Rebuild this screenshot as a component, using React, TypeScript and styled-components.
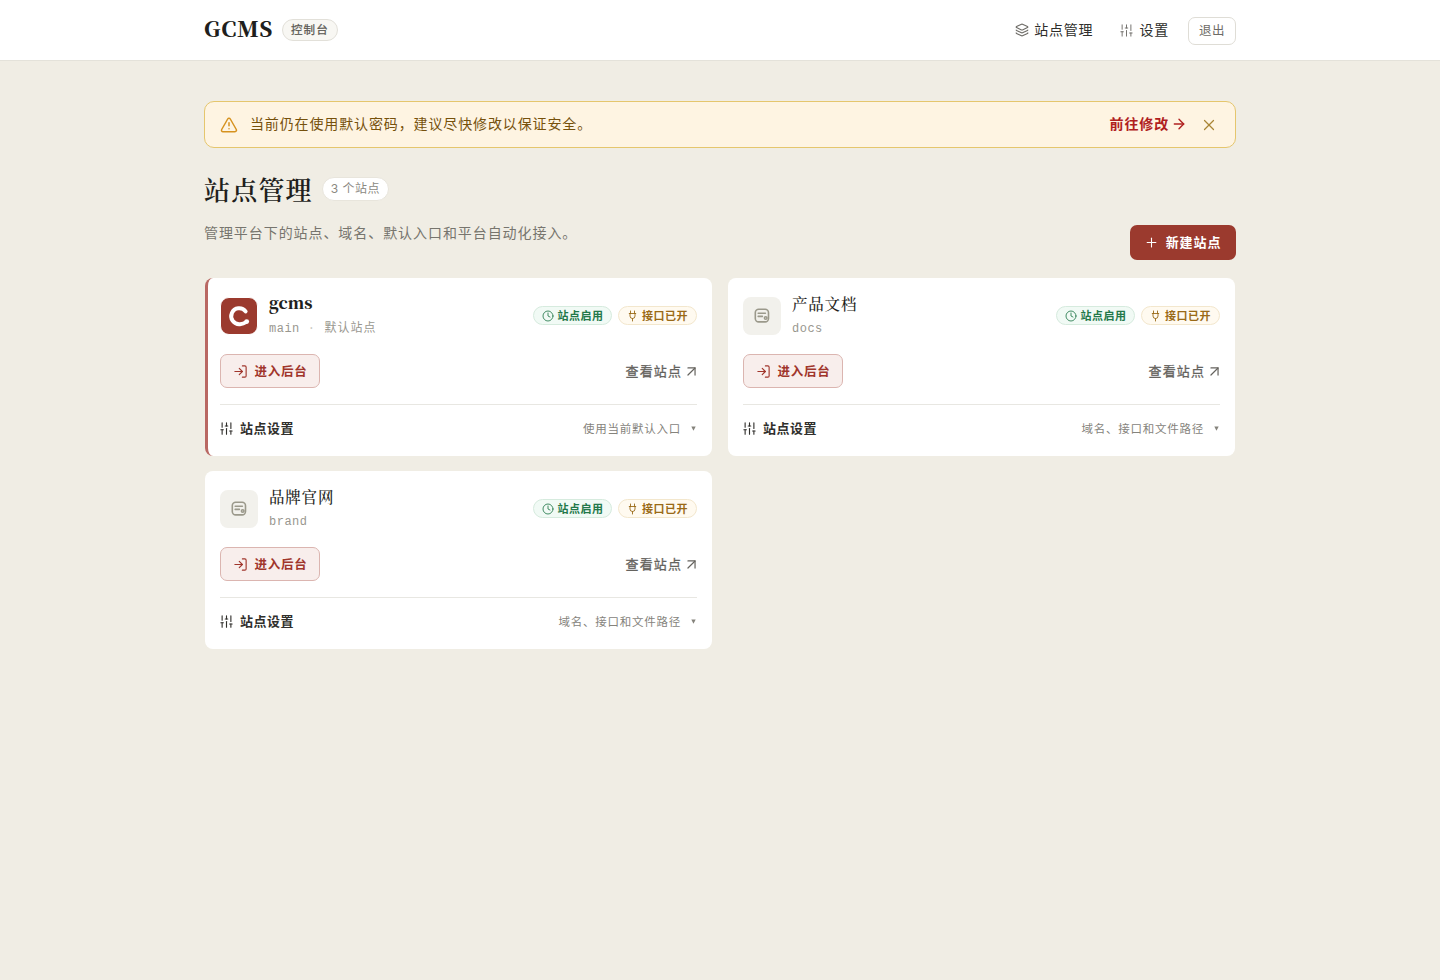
import React from "react";
import styled, { createGlobalStyle, css } from "styled-components";
import { ArrowRight, ArrowUpRight, Clock, Layers, LogIn, Plus, SlidersVertical, TriangleAlert, X } from "lucide-react";

const sans = `"Inter", "Noto Sans CJK SC", sans-serif`;
const cjkSans = `"Noto Sans CJK SC", sans-serif`;
const serif = `"Noto Serif CJK SC", "Noto Serif SC", "Source Han Serif SC", "Songti SC", "Liberation Serif", serif`;
const mono = `"Liberation Mono", "Noto Sans CJK SC", monospace`;

const GlobalStyle = createGlobalStyle`
  *, *::before, *::after { box-sizing: border-box; }
  body {
    margin: 0;
    min-height: 100vh;
    background: #f0ede4;
    color: #1f1f1d;
    font-family: ${sans};
    font-size: 14px;
    line-height: 1.5;
  }
  svg { display: block; flex: none; }
  a { color: inherit; text-decoration: none; }
  button { font-family: inherit; cursor: pointer; }
  h1, h2, p { margin: 0; }
`;

const Label = styled.span`
  padding-bottom: 2px;
`;

const Header = styled.header`
  height: 61px;
  background: #fff;
  border-bottom: 1px solid #e4e2da;
`;
const HeaderInner = styled.div`
  width: 1032px;
  height: 60px;
  margin: 0 auto;
  display: flex;
  align-items: center;
  justify-content: space-between;
`;
const Brand = styled.a`
  display: flex;
  align-items: center;
`;
const BrandName = styled.span`
  width: 78px;
  padding-bottom: 4px;
  font-family: ${serif};
  font-size: 21.5px;
  font-weight: 900;
  letter-spacing: 0.5px;
  line-height: 30px;
  white-space: nowrap;
`;
const BrandTag = styled.span`
  height: 22px;
  padding: 0 8px 0 8px;
  border: 1px solid #e2e0d9;
  border-radius: 11px;
  background: #f8f7f3;
  color: #5c5a55;
  font-size: 11.5px;
  -webkit-text-stroke: 0.25px currentColor;
  letter-spacing: 1.1px;
  line-height: 20px;
`;
const Nav = styled.nav`
  display: flex;
  align-items: center;
`;
const NavLink = styled.a`
  display: flex;
  align-items: center;
  gap: 5px;
  margin-right: 26px;
  font-size: 14px;
  letter-spacing: 0.8px;
  color: #2e2e2b;
  svg { color: #6d6b66; }
  & + & {
    margin-right: 19px;
  }
`;
const LogoutButton = styled.button`
  width: 48px;
  height: 28px;
  margin-top: 1px;
  padding: 0 0 2px;
  border: 1px solid #dfddd6;
  border-radius: 7px;
  background: #fff;
  color: #6d6b66;
  font-size: 12.5px;
  letter-spacing: 0.5px;
`;

const Main = styled.main`
  width: 1032px;
  margin: 0 auto;
  padding-top: 40px;
`;
const Alert = styled.div`
  height: 47px;
  padding: 0 17px 0 15px;
  display: flex;
  align-items: center;
  border: 1px solid #e5c66d;
  border-radius: 10px;
  background: #fef4e2;
  color: #76510c;
`;
const AlertText = styled.p`
  flex: 1;
  margin-left: 12px;
  padding-bottom: 3px;
  font-family: ${cjkSans};
  letter-spacing: 0.87px;
`;
const AlertLink = styled.a`
  display: flex;
  align-items: center;
  gap: 2px;
  margin-right: 13px;
  color: #b02020;
  font-weight: 700;
  letter-spacing: 0.87px;
  svg { margin-bottom: 1px; }
`;

const PageHead = styled.div`
  height: 129px;
  display: flex;
  justify-content: space-between;
  align-items: flex-end;
  padding: 22px 0 17px;
`;
const HeadCopy = styled.div`
  align-self: flex-start;
`;
const TitleRow = styled.div`
  display: flex;
  align-items: center;
  gap: 9px;
`;
const Title = styled.h1`
  font-family: ${serif};
  font-size: 26px;
  font-weight: 600;
  line-height: 38px;
  letter-spacing: 1.2px;
`;
const CountPill = styled.span`
  height: 24px;
  padding: 0 8px;
  border: 1px solid #e8e5dc;
  border-radius: 12px;
  background: #fff;
  color: #8b8982;
  font-size: 12px;
  letter-spacing: 0.5px;
  line-height: 22px;
`;
const Subtitle = styled.p`
  margin-top: 14px;
  color: #77756e;
  font-family: ${cjkSans};
  letter-spacing: 0.93px;
`;
const CreateButton = styled.button`
  width: 106px;
  height: 35px;
  display: flex;
  align-items: center;
  justify-content: center;
  gap: 7px;
  padding: 0 1px 1px 0;
  border: 0;
  border-radius: 7px;
  background: #9b3a2e;
  color: #fff;
  font-size: 13px;
  font-weight: 700;
  letter-spacing: 0.9px;
`;

const Grid = styled.div`
  display: grid;
  grid-template-columns: 1fr 1fr;
  gap: 13px 14px;
`;
const Card = styled.article<{ $primary?: boolean }>`
  height: 178px;
  margin: 1px;
  padding: 0 15px;
  border-radius: 8px;
  background: #fff;
  ${(p) =>
    p.$primary &&
    css`
      padding-left: 12px;
      border-left: 3px solid #b96863;
    `}
`;
const CardTop = styled.div`
  height: 76px;
  display: flex;
  align-items: center;
`;
const Tile = styled.div<{ $brand?: boolean }>`
  width: 38px;
  height: 38px;
  display: grid;
  place-items: center;
  border-radius: 8px;
  color: #9b998b;
  background: #f2f1ec;
  ${(p) =>
    p.$brand &&
    css`
      border: 1px solid #fff;
      border-radius: 9px;
      background: #9b3a2e;
      color: #fff;
    `}
`;
const SiteInfo = styled.div`
  flex: 1;
  margin-left: 11px;
  padding-bottom: 2px;
`;
const SiteName = styled.h2<{ $latin?: boolean }>`
  font-family: ${serif};
  font-size: ${(p) => (p.$latin ? "16px" : "15.5px")};
  font-weight: ${(p) => (p.$latin ? 900 : 500)};
  letter-spacing: ${(p) => (p.$latin ? "0" : "0.8px")};
  line-height: 20px;
`;
const SiteMeta = styled.div`
  display: flex;
  gap: 8px;
  font-family: ${mono};
  font-size: 12px;
  line-height: 18px;
  margin-top: 7px;
  letter-spacing: 0.5px;
  color: #99978f;
`;
const Dot = styled.span`
  color: #cbc9c2;
`;
const MetaNote = styled.span`
  margin-left: 1px;
  letter-spacing: 1px;
`;
const Badges = styled.div`
  display: flex;
  gap: 6px;
  margin-bottom: 1px;
`;
const Badge = styled.span<{ $tone: "green" | "amber" }>`
  width: 79px;
  height: 19px;
  padding-top: 1px;
  display: flex;
  align-items: center;
  justify-content: center;
  gap: 4px;
  border-radius: 10px;
  font-size: 11px;
  font-weight: 700;
  letter-spacing: 0.5px;
  line-height: 16px;
  ${(p) =>
    p.$tone === "green"
      ? css`
          color: #23784a;
          background: #f1faf5;
          border: 1px solid #d6ebde;
        `
      : css`
          color: #9a6a17;
          background: #fffaf0;
          border: 1px solid #f3e7cd;
        `}
`;
const CardActions = styled.div`
  height: 34px;
  display: flex;
  align-items: center;
  justify-content: space-between;
`;
const EnterButton = styled.button`
  width: 100px;
  height: 34px;
  display: flex;
  align-items: center;
  justify-content: center;
  gap: 7px;
  padding: 0;
  border: 1px solid #dbb5b0;
  border-radius: 7px;
  background: #f8eeec;
  color: #a0352b;
  font-size: 12.5px;
  font-weight: 700;
  letter-spacing: 0.7px;
`;
const VisitLink = styled.a`
  display: flex;
  align-items: center;
  margin-right: -3px;
  gap: 1px;
  color: #65635e;
  font-size: 13px;
  -webkit-text-stroke: 0.3px currentColor;
  letter-spacing: 1.1px;
  span { padding-top: 2px; }
`;
const SettingsRow = styled.div`
  height: 50px;
  margin-top: 16px;
  padding-bottom: 1px;
  border-top: 1px solid #e8e7e2;
  display: flex;
  align-items: center;
  justify-content: space-between;
`;
const SettingsLabel = styled.span`
  display: flex;
  align-items: center;
  gap: 6px;
  margin-left: -1px;
  font-size: 13px;
  font-weight: 700;
  letter-spacing: 0.5px;
  color: #302f2c;
  svg { margin-bottom: 2px; }
`;
const SettingsHint = styled.span`
  display: flex;
  align-items: center;
  gap: 10px;
  margin-right: 1px;
  font-size: 11.5px;
  letter-spacing: 0.75px;
  color: #85837c;
  span { padding-top: 2px; }
  svg { margin-bottom: 1px; }
`;

const PlugIcon = () => (
  <svg width="11" height="12" viewBox="0 0 22 24" fill="none" stroke="currentColor" strokeWidth="1.800" strokeLinecap="round" strokeLinejoin="round">
    <path d="M7 2v5M15 2v5M4.500 7h13M6 7v5a5 5 0 0 0 10 0V7M11 17v5" />
  </svg>
);
const LogoMark = () => (
  <svg width="36" height="36" viewBox="0 0 36 36" fill="none">
    <path d="M24.600 13.400A8 8 0 1 0 19 26.200Q22.500 26 25.200 24" stroke="currentColor" strokeWidth="4" strokeLinecap="round" />
    <circle cx="25.700" cy="23.600" r="2.400" fill="currentColor" />
  </svg>
);
const SiteIcon = () => (
  <svg width="16" height="16" viewBox="0 0 16 16" fill="none" stroke="currentColor" strokeWidth="1.600" strokeLinecap="round">
    <rect x="1.300" y="1.300" width="13.200" height="12.600" rx="3.400" />
    <path d="M4.200 5.200h7.200M4.200 8.400h4.200" />
    <circle cx="11.700" cy="10" r="1.300" />
  </svg>
);
const Caret = () => (
  <svg width="5" height="5" viewBox="0 0 5 5">
    <path d="M.300 .600h4.400L2.500 4.700z" fill="currentColor" />
  </svg>
);

type Site = { name: string; slug: string; isDefault?: boolean; hint: string };

const sites: Site[] = [
  { name: "gcms", slug: "main", isDefault: true, hint: "使用当前默认入口" },
  { name: "产品文档", slug: "docs", hint: "域名、接口和文件路径" },
  { name: "品牌官网", slug: "brand", hint: "域名、接口和文件路径" },
];

const SiteCard = ({ site }: { site: Site }) => (
  <Card $primary={site.isDefault}>
    <CardTop>
      <Tile $brand={site.isDefault}>{site.isDefault ? <LogoMark /> : <SiteIcon />}</Tile>
      <SiteInfo>
        <SiteName $latin={site.isDefault}>{site.name}</SiteName>
        <SiteMeta>
          <span>{site.slug}</span>
          {site.isDefault && (
            <>
              <Dot>·</Dot>
              <MetaNote>默认站点</MetaNote>
            </>
          )}
        </SiteMeta>
      </SiteInfo>
      <Badges>
        <Badge $tone="green">
          <Clock size={12} strokeWidth={1.7} />
          站点启用
        </Badge>
        <Badge $tone="amber">
          <PlugIcon />
          接口已开
        </Badge>
      </Badges>
    </CardTop>
    <CardActions>
      <EnterButton>
        <LogIn size={15} strokeWidth={1.8} />
        <Label>进入后台</Label>
      </EnterButton>
      <VisitLink href="#">
        <span>查看站点</span>
        <ArrowUpRight size={17} strokeWidth={1.7} />
      </VisitLink>
    </CardActions>
    <SettingsRow>
      <SettingsLabel>
        <SlidersVertical size={15} strokeWidth={1.8} />
        <span>站点设置</span>
      </SettingsLabel>
      <SettingsHint>
        <span>{site.hint}</span>
        <Caret />
      </SettingsHint>
    </SettingsRow>
  </Card>
);

export default function App() {
  return (
    <div lang="zh-CN">
      <GlobalStyle />
      <Header>
        <HeaderInner>
          <Brand href="#">
            <BrandName>GCMS</BrandName>
            <BrandTag>控制台</BrandTag>
          </Brand>
          <Nav>
            <NavLink href="#">
              <Layers size={14} strokeWidth={1.9} />
              <Label>站点管理</Label>
            </NavLink>
            <NavLink href="#">
              <SlidersVertical size={15} strokeWidth={1.5} />
              <Label>设置</Label>
            </NavLink>
            <LogoutButton>退出</LogoutButton>
          </Nav>
        </HeaderInner>
      </Header>
      <Main>
        <Alert>
          <TriangleAlert size={18} strokeWidth={2} color="#d6921f" />
          <AlertText>当前仍在使用默认密码，建议尽快修改以保证安全。</AlertText>
          <AlertLink href="#">
            <Label>前往修改</Label>
            <ArrowRight size={16} strokeWidth={2.1} />
          </AlertLink>
          <X size={18} strokeWidth={1.6} color="#a98435" />
        </Alert>
        <PageHead>
          <HeadCopy>
            <TitleRow>
              <Title>站点管理</Title>
              <CountPill>3 个站点</CountPill>
            </TitleRow>
            <Subtitle>管理平台下的站点、域名、默认入口和平台自动化接入。</Subtitle>
          </HeadCopy>
          <CreateButton>
            <Plus size={15} strokeWidth={1.7} />
            <Label>新建站点</Label>
          </CreateButton>
        </PageHead>
        <Grid>
          {sites.map((site) => (
            <SiteCard key={site.slug} site={site} />
          ))}
        </Grid>
      </Main>
    </div>
  );
}
